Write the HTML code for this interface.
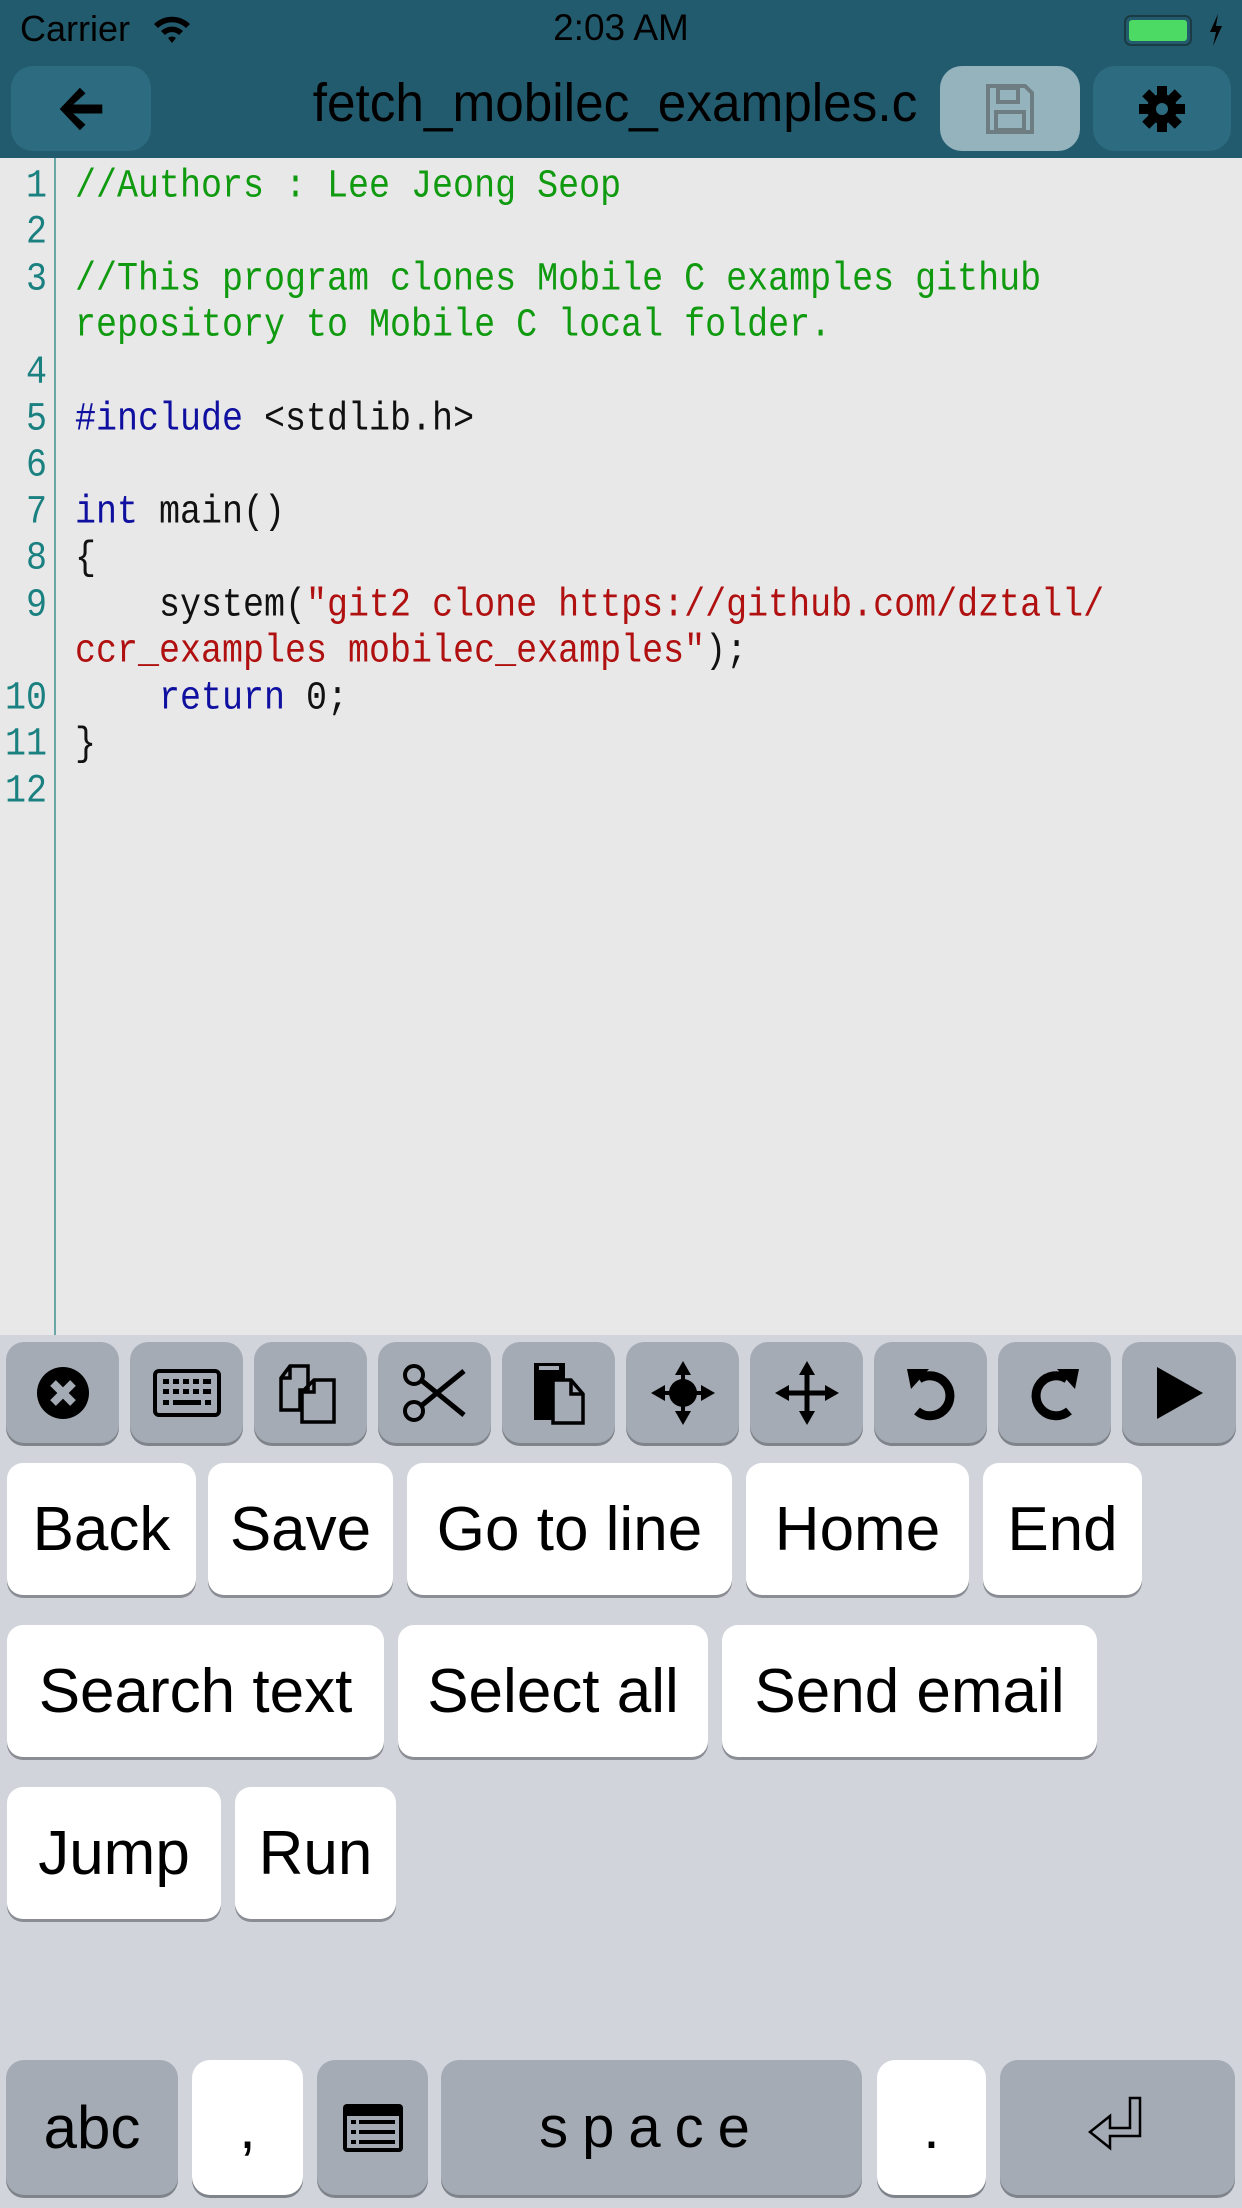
<!DOCTYPE html>
<html><head><meta charset="utf-8"><style>
*{margin:0;padding:0;box-sizing:border-box}
body{width:1242px;height:2208px;position:relative;overflow:hidden;background:#d1d5db;font-family:"Liberation Sans",sans-serif}
.abs{position:absolute}
#top{left:0;top:0;width:1242px;height:158px;background:#235b6e}
.nb{position:absolute;top:66px;height:85px;border-radius:22px;background:#2c6b80;display:flex;align-items:center;justify-content:center}
#ed{left:0;top:158px;width:1242px;height:1177px;background:#e8e8e8}
#gut{left:54px;top:158px;width:2px;height:1177px;background:#6aa6a6}
.ln{position:absolute;left:0;width:47px;text-align:right;color:#1a8080;font-family:"Liberation Mono",monospace;font-size:35px;line-height:46.5px;transform:scaleY(1.15)}
.cd{position:absolute;left:75px;font-family:"Liberation Mono",monospace;font-size:35px;line-height:46.5px;white-space:pre;color:#111;transform:scaleY(1.15);transform-origin:left center}
.g{color:#109a10}.b{color:#1010a0}.r{color:#b01010}
.tb{position:absolute;top:1342px;width:113px;height:101px;background:#a5abb5;border-radius:18px;box-shadow:0 3px 0 #7f838a;display:flex;align-items:center;justify-content:center}
.k{position:absolute;height:132px;background:#fff;border-radius:16px;box-shadow:0 3px 0 #8a8e94;font-size:62px;display:flex;align-items:center;justify-content:center;color:#000}
.bk{position:absolute;top:2060px;height:135px;border-radius:18px;box-shadow:0 3px 0 #7f838a;background:#a5abb5;display:flex;align-items:center;justify-content:center;font-size:60px;color:#000}
</style></head><body>
<div id="top" class="abs"></div>
<div class="abs" style="left:20px;top:8px;font-size:36px;color:#000">Carrier</div>
<svg class="abs" style="left:152px;top:14px" width="40" height="30" viewBox="0 0 40 30"><path d="M2 10 A26 26 0 0 1 38 10 L34 14 A20 20 0 0 0 6 14Z M9 17 A16 16 0 0 1 31 17 L27 21 A10 10 0 0 0 13 21Z M16 24 A6 6 0 0 1 24 24 L20 29Z" fill="#000"/></svg>
<div class="abs" style="left:0;width:1242px;top:7px;text-align:center;font-size:37px;color:#000">2:03 AM</div>
<div class="abs" style="left:1124px;top:15px;width:68px;height:31px;border:2px solid #1a3a44;border-radius:7px;padding:3px"><div style="width:100%;height:100%;background:#4cd964;border-radius:3px"></div></div>
<svg class="abs" style="left:1208px;top:14px" width="16" height="32" viewBox="0 0 16 32"><path d="M10 0 L2 18 H8 L5 32 L14 12 H8Z" fill="#000"/></svg>

<div class="nb" style="left:11px;width:140px"><svg width="56" height="56" viewBox="0 0 50 50"><path d="M24 6 L6 25 L24 44 L29 39 L18 29 H44 V21 H18 L29 11Z" fill="#000"/></svg></div>
<div class="abs" style="left:290px;width:650px;top:72px;text-align:center;font-size:54px;color:#000;transform:scaleX(0.95)">fetch_mobilec_examples.c</div>
<div class="nb" style="left:940px;width:140px;background:#94b3bd"><svg width="50" height="52" viewBox="0 0 50 52"><path d="M3 3 H40 L47 10 V49 H3Z" fill="none" stroke="#6e7d82" stroke-width="4"/><rect x="13" y="5" width="20" height="14" fill="none" stroke="#6e7d82" stroke-width="4"/><rect x="11" y="29" width="28" height="18" fill="none" stroke="#6e7d82" stroke-width="4"/></svg></div>
<div class="nb" style="left:1093px;width:138px"><svg width="50" height="50" viewBox="0 0 50 50"><g fill="#000"><circle cx="25" cy="25" r="15"/><rect x="20" y="2" width="10" height="46"/><rect x="20" y="2" width="10" height="46" transform="rotate(45 25 25)"/><rect x="20" y="2" width="10" height="46" transform="rotate(90 25 25)"/><rect x="20" y="2" width="10" height="46" transform="rotate(135 25 25)"/></g><circle cx="25" cy="25" r="6" fill="#2c6b80"/></svg></div>

<div id="ed" class="abs"></div>
<div id="gut" class="abs"></div>
<div class="ln" style="top:163px">1</div>
<div class="ln" style="top:209px">2</div>
<div class="ln" style="top:256px">3</div>
<div class="ln" style="top:349px">4</div>
<div class="ln" style="top:396px">5</div>
<div class="ln" style="top:442px">6</div>
<div class="ln" style="top:489px">7</div>
<div class="ln" style="top:535px">8</div>
<div class="ln" style="top:582px">9</div>
<div class="ln" style="top:675px">10</div>
<div class="ln" style="top:721px">11</div>
<div class="ln" style="top:768px">12</div>
<div class="cd g" style="top:163px">//Authors : Lee Jeong Seop</div>
<div class="cd g" style="top:256px">//This program clones Mobile C examples github</div>
<div class="cd g" style="top:302px">repository to Mobile C local folder.</div>
<div class="cd" style="top:396px"><span class="b">#include</span> &lt;stdlib.h&gt;</div>
<div class="cd" style="top:489px"><span class="b">int</span> main()</div>
<div class="cd" style="top:535px">{</div>
<div class="cd" style="top:582px">    system(<span class="r">"git2 clone https://github.com/dztall/</span></div>
<div class="cd" style="top:628px"><span class="r">ccr_examples mobilec_examples"</span>);</div>
<div class="cd" style="top:675px">    <span class="b">return</span> 0;</div>
<div class="cd" style="top:721px">}</div>

<div class="tb" style="left:6px"><svg width="56" height="56" viewBox="0 0 56 56"><circle cx="28" cy="28" r="26" fill="#000"/><path d="M18 18 L38 38 M38 18 L18 38" stroke="#a5abb5" stroke-width="8"/></svg></div>
<div class="tb" style="left:130px"><svg width="68" height="48" viewBox="0 0 68 48"><rect x="2" y="2" width="64" height="44" rx="4" fill="none" stroke="#000" stroke-width="4"/><g fill="#000"><rect x="10" y="10" width="6" height="5"/><rect x="20" y="10" width="6" height="5"/><rect x="30" y="10" width="6" height="5"/><rect x="40" y="10" width="6" height="5"/><rect x="50" y="10" width="8" height="5"/><rect x="10" y="20" width="6" height="5"/><rect x="20" y="20" width="6" height="5"/><rect x="30" y="20" width="6" height="5"/><rect x="40" y="20" width="6" height="5"/><rect x="50" y="20" width="8" height="5"/><rect x="10" y="31" width="6" height="5"/><rect x="20" y="31" width="28" height="5"/><rect x="52" y="31" width="6" height="5"/></g></svg></div>
<div class="tb" style="left:254px"><svg width="66" height="66" viewBox="0 0 66 66"><path d="M12 6 H30 V30 H22 V50 H3 V18Z M12 6 V18 H3" fill="none" stroke="#000" stroke-width="3.5"/><path d="M36 20 H56 V62 H24 V32Z M36 20 V32 H24" fill="none" stroke="#000" stroke-width="3.5"/></svg></div>
<div class="tb" style="left:378px"><svg width="66" height="60" viewBox="0 0 66 60"><circle cx="12" cy="12" r="9" fill="none" stroke="#000" stroke-width="4"/><circle cx="12" cy="48" r="9" fill="none" stroke="#000" stroke-width="4"/><path d="M19 17 L62 52 M19 43 L62 8" stroke="#000" stroke-width="5"/></svg></div>
<div class="tb" style="left:502px"><svg width="56" height="66" viewBox="0 0 56 66"><path d="M3 3 H34 V60 H3Z" fill="#000"/><rect x="8" y="6" width="20" height="4" fill="#a5abb5"/><path d="M22 20 H40 L52 34 V63 H22Z" fill="#a5abb5" stroke="#000" stroke-width="3.5"/><path d="M40 20 V34 H52" fill="none" stroke="#000" stroke-width="3.5"/></svg></div>
<div class="tb" style="left:626px"><svg width="66" height="66" viewBox="0 0 66 66"><g fill="#000"><circle cx="33" cy="33" r="14"/><path d="M33 1 L41 15 H25Z M33 65 L41 51 H25Z M1 33 L15 25 V41Z M65 33 L51 25 V41Z"/><rect x="31" y="10" width="4" height="46"/><rect x="10" y="31" width="46" height="4"/></g></svg></div>
<div class="tb" style="left:750px"><svg width="66" height="66" viewBox="0 0 66 66"><g fill="#000"><path d="M33 1 L41 15 H25Z M33 65 L41 51 H25Z M1 33 L15 25 V41Z M65 33 L51 25 V41Z"/><rect x="30.5" y="10" width="5" height="46"/><rect x="10" y="30.5" width="46" height="5"/></g></svg></div>
<div class="tb" style="left:874px"><svg width="56" height="60" viewBox="0 0 56 60"><path d="M16 16 A20 20 0 1 1 14 48" fill="none" stroke="#000" stroke-width="9"/><path d="M4 6 L26 6 L8 26Z" fill="#000"/></svg></div>
<div class="tb" style="left:998px"><svg width="56" height="60" viewBox="0 0 56 60"><path d="M40 16 A20 20 0 1 0 42 48" fill="none" stroke="#000" stroke-width="9"/><path d="M52 6 L30 6 L48 26Z" fill="#000"/></svg></div>
<div class="tb" style="left:1122px;width:114px"><svg width="52" height="56" viewBox="0 0 52 56"><path d="M4 2 L50 28 L4 54Z" fill="#000"/></svg></div>

<div class="k" style="left:7px;top:1463px;width:189px">Back</div>
<div class="k" style="left:208px;top:1463px;width:185px">Save</div>
<div class="k" style="left:407px;top:1463px;width:325px">Go to line</div>
<div class="k" style="left:746px;top:1463px;width:223px">Home</div>
<div class="k" style="left:983px;top:1463px;width:159px">End</div>
<div class="k" style="left:7px;top:1625px;width:377px">Search text</div>
<div class="k" style="left:398px;top:1625px;width:310px">Select all</div>
<div class="k" style="left:722px;top:1625px;width:375px">Send email</div>
<div class="k" style="left:7px;top:1787px;width:214px">Jump</div>
<div class="k" style="left:235px;top:1787px;width:161px">Run</div>

<div class="bk" style="left:6px;width:172px">abc</div>
<div class="bk" style="left:192px;width:111px;background:#fff">,</div>
<div class="bk" style="left:317px;width:111px"><svg width="64" height="52" viewBox="0 0 64 52"><rect x="2" y="2" width="60" height="48" rx="4" fill="#000"/><g fill="#a5abb5"><rect x="6" y="14" width="52" height="32"/></g><g fill="#000"><rect x="10" y="18" width="5" height="4"/><rect x="18" y="18" width="36" height="4"/><rect x="10" y="28" width="5" height="4"/><rect x="18" y="28" width="36" height="4"/><rect x="10" y="38" width="5" height="4"/><rect x="18" y="38" width="36" height="4"/></g></svg></div>
<div class="bk" style="left:441px;width:421px;letter-spacing:14px;font-size:58px">space</div>
<div class="bk" style="left:877px;width:109px;background:#fff">.</div>
<div class="bk" style="left:1000px;width:235px"><svg width="64" height="64" viewBox="0 0 64 64"><path d="M44 2 H54 V40 H24 V52 L4 36 L24 20 V32 H44Z" fill="none" stroke="#000" stroke-width="2.5"/></svg></div>
</body></html>
